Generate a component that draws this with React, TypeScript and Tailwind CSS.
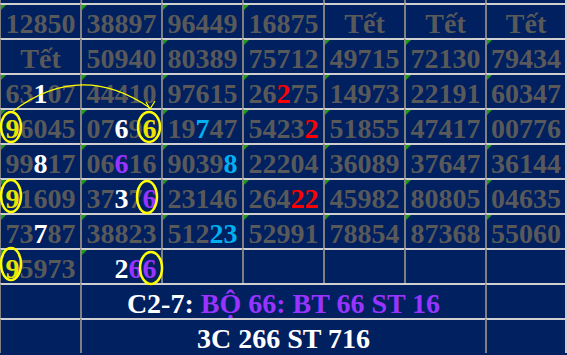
import React from "react";

type Seg = string | [string, string];

const tone: Record<string, string> = {
  w: "text-white",
  r: "text-[#ff0000]",
  b: "text-[#00b0f0]",
  p: "text-[#9933ff]",
  y: "text-[#ece400]",
  h: "text-transparent",
};

// null = empty cell, "T" = Tết
const rows: (Seg[] | null | "T")[][] = [
  [["12850"], ["38897"], ["96449"], ["16875"], "T", "T", "T"],
  ["T", ["50940"], ["80389"], ["75712"], ["49715"], ["72130"], ["79434"]],
  [["63", ["1", "w"], "07"], ["44410"], ["97615"], ["26", ["2", "r"], "75"], ["14973"], ["22191"], ["60347"]],
  [[["9", "y"], "6045"], ["07", ["6", "w"], "9", ["6", "y"]], ["19", ["7", "b"], "47"], ["5423", ["2", "r"]], ["51855"], ["47417"], ["00776"]],
  [["99", ["8", "w"], "17"], ["06", ["6", "p"], "16"], ["9039", ["8", "b"]], ["22204"], ["36089"], ["37647"], ["36144"]],
  [[["9", "y"], "1609"], ["37", ["3", "w"], "7", ["6", "p"]], ["23146"], ["264", ["22", "r"]], ["45982"], ["80805"], ["04635"]],
  [["73", ["7", "w"], "87"], ["38823"], ["512", ["23", "b"]], ["52991"], ["78854"], ["87368"], ["55060"]],
  [[["9", "y"], "5973"], [["00", "h"], ["2", "w"], ["66", "p"]], null, null, null, null, null],
];

const cols = "grid grid-cols-[80px_81px_81px_81px_81px_81px_82px]";

function edge(i: number) {
  if (i === 0) return "border-l border-l-[#808080]";
  if (i === 6) return "border-l-2 border-l-[#808080] border-r-2 border-r-[#cfcfcf]";
  return "border-l-2 border-l-[#808080]";
}

function Flag() {
  return (
    <span className="absolute left-0 top-0 w-0 h-0 border-t-[5px] border-r-[5px] border-t-[#1f9a1f] border-r-transparent" />
  );
}

function Cell({ value, i, noFlag }: { value: Seg[] | null | "T"; i: number; noFlag?: boolean }) {
  return (
    <div className={`relative flex items-center justify-center pt-1 border-t-2 border-t-[#cfcfcf] ${edge(i)}`}>
      {Array.isArray(value) && !noFlag && <Flag />}
      {value === "T" && <span>Tết</span>}
      {Array.isArray(value) && (
        <span>
          {value.map((s, k) =>
            typeof s === "string" ? <span key={k}>{s}</span> : <span key={k} className={tone[s[1]]}>{s[0]}</span>
          )}
        </span>
      )}
    </div>
  );
}

export default function App() {
  return (
    <div className="relative w-[567px] h-[355px] overflow-hidden bg-[#002060] text-[#595959] font-['Liberation_Serif',serif] font-bold text-[28px] leading-none">
      <div className={`${cols} h-[3px]`}>
        {Array.from({ length: 7 }).map((_, i) => (
          <div key={i} className={edge(i)} />
        ))}
      </div>

      {rows.map((row, r) => (
        <div key={r} className={`${cols} h-[35px]`}>
          {row.map((v, i) => (
            <Cell key={i} value={v} i={i} noFlag={r === 1 && i === 1} />
          ))}
        </div>
      ))}

      <div className={`${cols} h-[35px]`}>
        <div className={`border-t-2 border-t-[#cfcfcf] ${edge(0)}`} />
        <div className="col-span-5 flex items-center justify-center pt-1 border-t-2 border-t-[#cfcfcf] border-l-2 border-l-[#808080] text-white">
          C2-7:&nbsp;<span className="text-[#9933ff]">BỘ 66: BT 66 ST 16</span>
        </div>
        <div className={`border-t-2 border-t-[#cfcfcf] ${edge(6)}`} />
      </div>
      <div className={`${cols} h-[35px]`}>
        <div className={`border-t-2 border-t-[#cfcfcf] ${edge(0)}`} />
        <div className="col-span-5 flex items-center justify-center pt-1 border-t-2 border-t-[#cfcfcf] border-l-2 border-l-[#808080] text-white">
          3C 266 ST 716
        </div>
        <div className={`border-t-2 border-t-[#cfcfcf] ${edge(6)}`} />
      </div>

      {/* annotations drawn over the sheet */}
      <svg className="absolute inset-0 pointer-events-none" width="567" height="355" fill="none">
        <g stroke="#ffff00" strokeWidth="2.5">
          <ellipse cx="11" cy="127" rx="10" ry="15" />
          <ellipse cx="149" cy="127" rx="11" ry="15" />
          <ellipse cx="11" cy="196" rx="10" ry="16" />
          <ellipse cx="147" cy="197" rx="10" ry="16" />
          <ellipse cx="11" cy="264" rx="10" ry="16" />
          <ellipse cx="151" cy="268" rx="11" ry="16" />
        </g>
        <g stroke="#ffff00" strokeWidth="1.2">
          <path d="M12 112 Q80 60 150 108" />
          <path d="M146 102 L150 109 L155 101" />
        </g>
      </svg>
    </div>
  );
}
